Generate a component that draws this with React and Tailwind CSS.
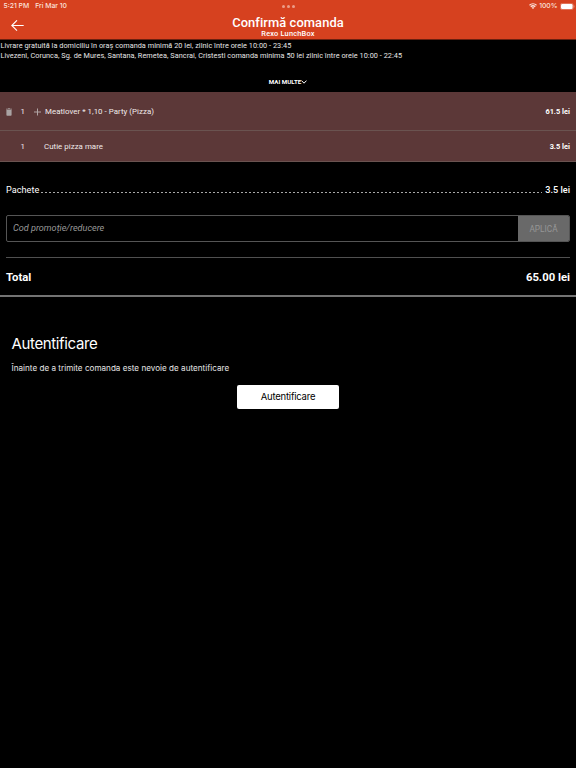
const items = [
  { id: 1, qty: 1, name: 'Meatlover * 1,10 - Party (Pizza)', price: '61.5 lei', editable: true },
  { id: 2, qty: 1, name: 'Cutie pizza mare', price: '3.5 lei', editable: false },
]

function StatusBar() {
  return (
    <div className="h-[12px] flex items-center justify-between px-[3.5px] font-['Inter'] font-medium text-[6.8px] leading-[12px] text-[#fbe3dc]">
      <div className="flex-1 flex gap-[6px] whitespace-nowrap">
        <span>5:21 PM</span>
        <span>Fri Mar 10</span>
      </div>
      <div className="flex gap-[2px]">
        <span className="size-[3px] rounded-full bg-[#eb9d89]" />
        <span className="size-[3px] rounded-full bg-[#eb9d89]" />
        <span className="size-[3px] rounded-full bg-[#eb9d89]" />
      </div>
      <div className="flex-1 flex items-center justify-end">
        <svg width="8" height="6" viewBox="0 0 16 12" fill="none" stroke="currentColor" strokeWidth="2.3">
          <path d="M1 4.5C5 .5 11 .5 15 4.5M3.5 7.5c2.5-2.5 6.5-2.5 9 0" />
          <path d="M8 12L5.3 9.3c1.4-1.3 4-1.3 5.4 0z" fill="currentColor" stroke="none" />
        </svg>
        <span className="ml-[2px] mr-[2px]">100%</span>
        <svg className="-mr-[2px]" width="15" height="7" viewBox="0 0 15 7">
          <rect x=".4" y=".4" width="12.8" height="6.2" rx="1.8" fill="none" stroke="#eb9d89" strokeWidth=".6" />
          <rect x="1" y="1" width="11.6" height="5" rx="1.2" fill="#fff" />
          <path d="M14 2.5v2" stroke="#eb9d89" strokeWidth=".8" />
        </svg>
      </div>
    </div>
  )
}

function Header() {
  return (
    <header className="h-[40px] bg-[#d6411f] border-b border-[#6b2010] text-white">
      <StatusBar />
      <div className="h-[27px] grid grid-cols-[1fr_auto_1fr]">
        <button className="pl-[11px] flex items-center">
          <svg width="13" height="12" viewBox="0 0 13 12" fill="none" stroke="currentColor" strokeWidth="1.1">
            <path d="M12.7 5.5H1M6 .3L.8 5.5 6 10.7" />
          </svg>
        </button>
        <div className="text-center pt-[4px]">
          <h1 className="text-[12.9px] leading-[14px] font-medium tracking-[0.08px]">Confirmă comanda</h1>
          <h2 className="text-[7.4px] leading-[7px] font-medium tracking-[0.2px]">Rexo LunchBox</h2>
        </div>
      </div>
    </header>
  )
}

function TrashIcon() {
  return (
    <svg width="6" height="8" viewBox="0 0 6 8" fill="#aaa3a3">
      <path d="M0 .7h1.8L2.2.2h1.600l.4.5H6v.9H0zM.4 2h5.200v5q0 .8-.8.8H1.200q-.8 0-.8-.8z" />
    </svg>
  )
}

function OrderRow({ item }) {
  return (
    <div className={`flex items-center bg-[#5c3838] border-b border-[#6a5350] pr-[6px] pt-[2px] text-[7.9px] text-[#f0eaea] ${item.editable ? 'h-[39px]' : 'h-[31px]'}`}>
      <div className="w-[20.5px] pl-[6px]">
        {item.editable && <TrashIcon />}
      </div>
      <span className="w-[12.5px]">{item.qty}</span>
      {item.editable && (
        <svg className="mr-[4px]" width="8" height="8" viewBox="0 0 8 8" stroke="#b0a4a4" strokeWidth="1">
          <path d="M4.5 .5v7M1 4h7" />
        </svg>
      )}
      <span className={item.editable ? 'tracking-[0.03px]' : 'pl-[11px] tracking-[0.03px]'}>{item.name}</span>
      <span className="ml-auto text-[7.4px] font-bold text-white">{item.price}</span>
    </div>
  )
}

export default function App() {
  return (
    <div className="w-[576px] h-[768px] overflow-hidden bg-black text-white font-['Roboto',sans-serif]">
      <Header />

      <section className="h-[52px] flex flex-col">
        <div className="pt-[1px] pl-[0.5px] text-[7.3px] leading-[9.6px] tracking-[0.042px] whitespace-nowrap text-[#e6e6e6]">
          <p>Livrare gratuită la domiciliu în oraș comanda minimă 20 lei, zilnic între orele 10:00 - 23:45</p>
          <p>Livezeni, Corunca, Sg. de Mures, Santana, Remetea, Sancrai, Cristesti comanda minima 50 lei zilnic între orele 10:00 - 22:45</p>
        </div>
        <button className="mt-auto mb-[5px] h-[9px] flex items-center justify-center text-[6.2px] font-bold leading-[9px]">
          MAI MULTE
          <svg className="-mt-px" width="6" height="4" viewBox="0 0 6 4" fill="none" stroke="currentColor" strokeWidth="1">
            <path d="M.5.6L3 3.2 5.5.6" />
          </svg>
        </button>
      </section>

      {items.map(item => (
        <OrderRow key={item.id} item={item} />
      ))}

      <section className="px-[6px]">
        <div className="pt-[22px] h-[53px] flex text-[9.1px] leading-[12px]">
          <span className="tracking-[0.05px]">Pachete</span>
          <span
            className="flex-1 ml-[2px] mr-[3px] mt-[8px] h-px bg-[repeating-linear-gradient(90deg,#a8a8a8_0_2px,transparent_2px_4px)]"
          />
          <span className="font-medium">3.5 lei</span>
        </div>

        <form className="h-[27px] flex rounded-[2px] border border-[#555] overflow-hidden">
          <input
            className="flex-1 px-[6px] pt-[1px] bg-transparent text-[9.1px] italic outline-none placeholder:text-[#9a9a9a] placeholder:opacity-100"
            placeholder="Cod promoție/reducere"
          />
          <button type="button" className="w-[51px] pt-[1px] bg-[#696969] text-[8.3px] text-[#969696]">APLICĂ</button>
        </form>

        <div className="mt-[15px] h-[38px] border-t border-[#505050] pt-[3px] flex items-center justify-between text-[11.3px] font-bold">
          <span>Total</span>
          <span>65.00 lei</span>
        </div>
      </section>
      <div className="h-[2px] bg-[#737373]" />

      <section className="px-[11.5px] pt-[37px] font-['Inter']">
        <h3 className="text-[15px] leading-[20px] tracking-[-0.36px]">Autentificare</h3>
        <p className="mt-[9px] text-[8.1px] leading-[10px] tracking-[0.02px] text-[#e6e6e6]">Înainte de a trimite comanda este nevoie de autentificare</p>
        <button className="mt-[12px] mx-auto block w-[102px] h-[24px] rounded-[2px] bg-white text-black text-[9.5px] tracking-[-0.22px]">Autentificare</button>
      </section>
    </div>
  )
}
